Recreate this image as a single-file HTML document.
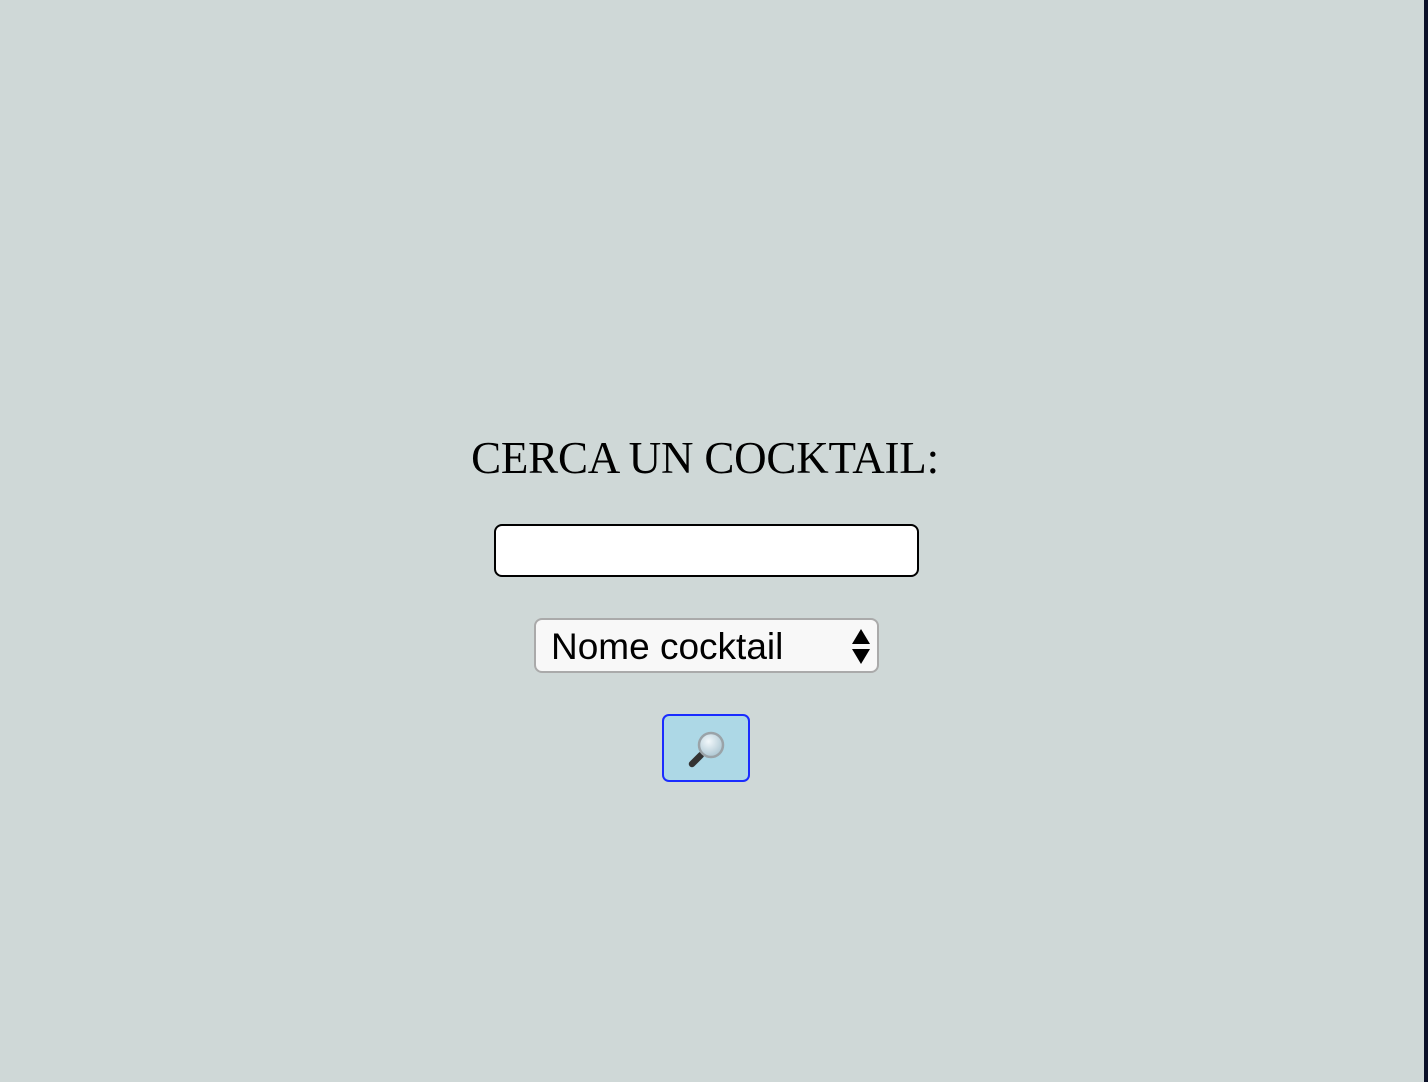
<!DOCTYPE html>
<html><head><style>
html,body{margin:0;padding:0;}
body{width:1428px;height:1082px;background:#cfd8d7;position:relative;overflow:hidden;font-family:"Liberation Sans",sans-serif;}
.strip{position:absolute;right:0;top:0;width:4px;height:1082px;background:#0b1028;}
h1{position:absolute;left:0;width:1410px;top:428px;margin:0;text-align:center;font-family:"Liberation Serif",serif;font-weight:normal;font-size:45px;letter-spacing:-0.2px;line-height:60px;color:#000;}
.inp{position:absolute;left:494px;top:524px;width:421px;height:49px;border:2px solid #000;border-radius:8px;background:#fff;}
.sel{position:absolute;left:534px;top:618px;width:341px;height:51px;border:2px solid #aaa;border-radius:8px;background:#f8f8f8;}
.sel span{position:absolute;left:15px;top:6px;font-size:37px;line-height:42px;color:#000;}
.sel svg{position:absolute;right:6px;top:9px;}
.btn{position:absolute;left:662px;top:714px;width:84px;height:64px;border:2px solid #1a2cff;border-radius:7px;background:#add8e6;}
.btn svg{position:absolute;left:24px;top:14px;}
</style></head><body>
<div class="strip"></div>
<h1>CERCA UN COCKTAIL:</h1>
<div class="inp"></div>
<div class="sel"><span>Nome cocktail</span>
<svg width="20" height="36" viewBox="0 0 20 36"><path d="M10 0 L19 15 L1 15 Z M1 20 L19 20 L10 35 Z" fill="#000"/></svg></div>
<div class="btn"><svg width="40" height="40" viewBox="0 0 40 40">
<defs><radialGradient id="g" cx="40%" cy="35%" r="70%"><stop offset="0" stop-color="#f2f8fb"/><stop offset="1" stop-color="#a9c4d0"/></radialGradient></defs>
<line x1="13" y1="25" x2="4" y2="34" stroke="#333" stroke-width="6.5" stroke-linecap="round"/>
<circle cx="23" cy="15" r="12" fill="url(#g)" stroke="#9aa3a8" stroke-width="2.5"/>
</svg></div>
</body></html>
